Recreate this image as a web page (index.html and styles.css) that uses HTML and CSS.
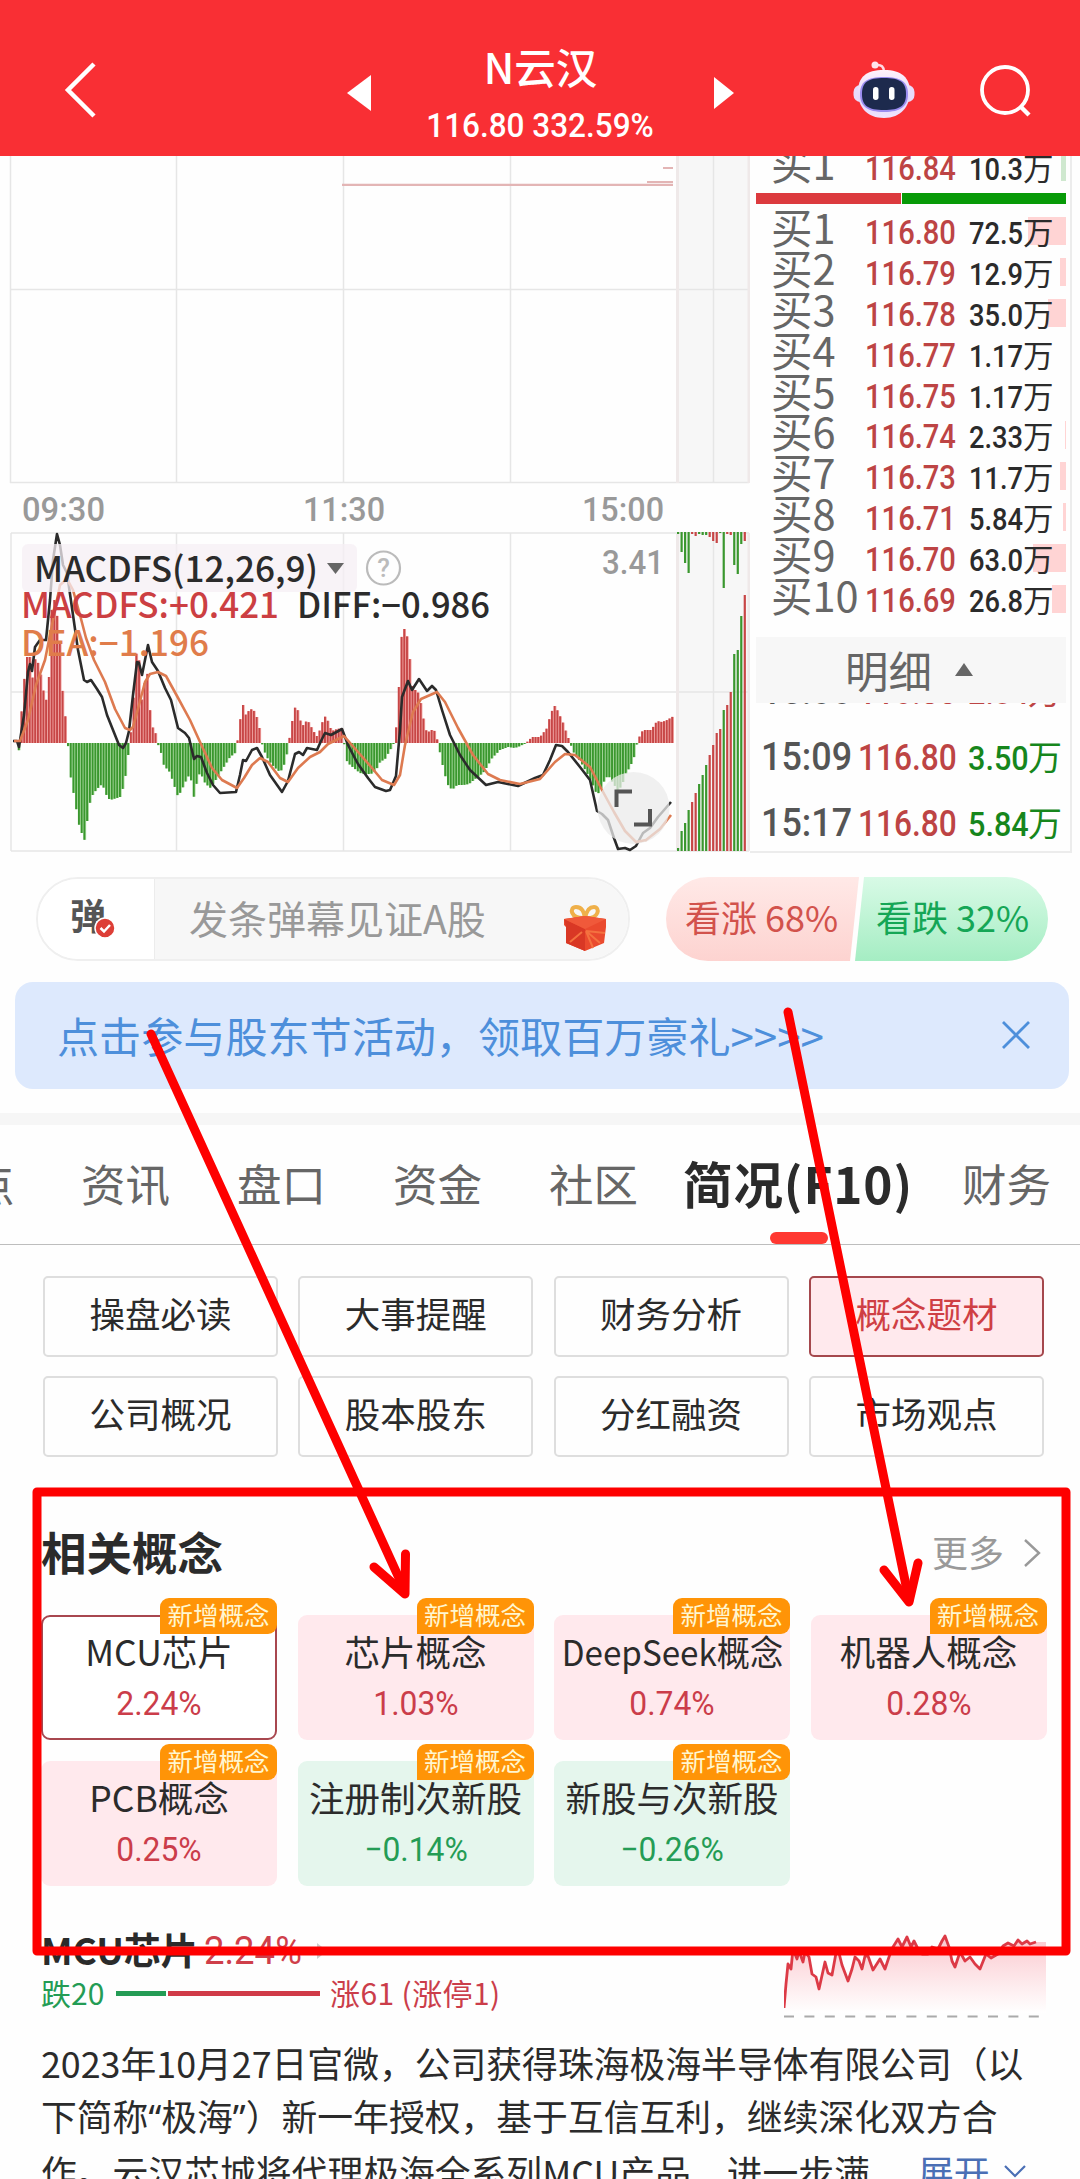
FILE: index.html
```html
<!DOCTYPE html>
<html lang="zh-CN">
<head>
<meta charset="utf-8">
<title>N云汉</title>
<link rel="stylesheet" href="styles.css">
</head>
<body>
<header class="top">
  <svg class="back" width="36" height="60" viewBox="0 0 36 60"><path d="M32 4 6 30 32 56" fill="none" stroke="#fff" stroke-width="4.500"/></svg>
  <svg class="prev" width="24" height="36" viewBox="0 0 24 36"><path d="M24 0V36L0 18Z" fill="#fff"/></svg>
  <div class="stock">
    <div class="name">N云汉</div>
    <div class="quote"><span class="din">116.80 332.59%</span></div>
  </div>
  <svg class="next" width="20" height="32" viewBox="0 0 20 32"><path d="M0 0V32L20 16Z" fill="#fff"/></svg>
  <svg class="robot" width="62" height="58" viewBox="0 0 62 58">
    <defs>
      <linearGradient id="shell" x2="0" y2="1"><stop stop-color="#fff3fb"/><stop offset=".6" stop-color="#e3d6fb"/><stop offset="1" stop-color="#efe4ff"/></linearGradient>
    </defs>
    <path d="M31 12Q31 4 23 5" fill="none" stroke="#ffd9e4" stroke-width="2.500"/><circle cx="22" cy="5" r="3.500" fill="#ffe4ec"/>
    <rect x="0.500" y="25" width="61" height="17" rx="7" fill="#e8dcfb"/>
    <path d="M31 10C49 10 57 18 57 32S48 58 31 58 5 47 5 32 13 10 31 10" fill="url(#shell)"/>
    <path d="M31 17C48 17 55 22 55 34S48 52 31 52 7 46 7 34 14 17 31 17" fill="#9b8df0"/>
    <path d="M31 18C47 18 53 22 53 34S47 50 31 50 9 46 9 34 15 18 31 18" fill="#1d2a4d"/>
    <rect x="20" y="27" width="5.500" height="13" rx="2.700" fill="#fff"/><rect x="36" y="27" width="5.500" height="13" rx="2.700" fill="#fff"/>
  </svg>
  <svg class="search" width="54" height="54" viewBox="0 0 54 54"><circle cx="26" cy="26" r="23" fill="none" stroke="#fff" stroke-width="3.800"/><path d="m42 43 8 8" stroke="#fff" stroke-width="4.500"/></svg>
</header>

<section class="market">
  <svg class="charts" id="charts" width="750" height="699" viewBox="0 156 750 699">
    <rect x="677" y="155" width="72" height="328" fill="#f7f7f7"/>
    <rect x="677" y="532" width="72" height="319" fill="#f7f7f7"/>
    <g stroke="#e6e6e6" stroke-width="1.500" fill="none">
      <path d="M10.500 155V483M176.500 155V483M343.500 155V483M510.500 155V483M713.500 155V483M10 289.500H749M10 482.500H749"/>
      <path d="M11 533V851M176.500 533V851M343.500 533V851M510.500 533V851M713.500 533V851M11 533H749M11 692H749M11 851H749"/>
    </g>
    <path d="M677.500 155V483M677.500 533V851M749 155V483M749 533V851" stroke="#efe9e9" stroke-width="3"/>
    <path d="M342 184.800H673M647 182H673M663 168H673" stroke="#e3b5b5" stroke-width="2.200"/>
    <g class="axis">
      <text x="22" y="520.500" textLength="83" lengthAdjust="spacingAndGlyphs">09:30</text>
      <text x="303" y="520.500" textLength="82" lengthAdjust="spacingAndGlyphs">11:30</text>
      <text x="582" y="520.500" textLength="82" lengthAdjust="spacingAndGlyphs">15:00</text>
      <text x="602" y="574" textLength="62" lengthAdjust="spacingAndGlyphs">3.41</text>
    </g>
    <g id="bars"></g>
    <path id="diff" fill="none" stroke="#2b2b2b" stroke-width="2.600" stroke-linejoin="round"/>
    <path id="dea" fill="none" stroke="#dd7a50" stroke-width="2.600" stroke-linejoin="round"/>
    <rect x="22" y="544" width="335" height="48" rx="6" fill="#f5eff4" opacity=".75"/>
    <path d="M327 563H344L335.500 574Z" fill="#666"/>
    <circle cx="383.500" cy="568" r="16.500" fill="none" stroke="#bbb" stroke-width="2.200"/>
    <text class="hint" x="383.500" y="577" text-anchor="middle">?</text>
    <g class="ind">
      <text x="34" y="582" textLength="284" lengthAdjust="spacingAndGlyphs">MACDFS(12,26,9)</text>
      <text class="r" x="21" y="618" textLength="258" lengthAdjust="spacingAndGlyphs">MACDFS:+0.421</text>
      <text x="297" y="618" textLength="193" lengthAdjust="spacingAndGlyphs">DIFF:−0.986</text>
      <text class="o" x="21" y="656" textLength="188" lengthAdjust="spacingAndGlyphs">DEA:−1.196</text>
    </g>
    <circle cx="633.500" cy="808" r="36" fill="#ebebeb" opacity=".75"/>
    <path d="M616.500 807V791.500H632M634 824.500H650V809" fill="none" stroke="#555" stroke-width="4"/>
  </svg>

  <div class="book">
    <div class="clip">
      <div class="level sell"><span class="lab">买1</span><span class="pr">116.84</span><span class="vol"><i>10.3</i>万</span><b style="width:5px"></b></div>
    </div>
    <div class="ratio"><span></span><span></span></div>
    <div class="levels" id="levels"></div>
    <div class="detail">明细<svg width="18" height="14" viewBox="0 0 18 14"><path d="M9 0 18 13H0Z" fill="#666"/></svg></div>
    <div class="ticks">
      <div class="tick cut"><span class="tm">15:00</span><span class="tp">116.80</span><span class="tv up"><i>2.34</i>万</span></div>
      <div class="tick"><span class="tm">15:09</span><span class="tp">116.80</span><span class="tv"><i>3.50</i>万</span></div>
      <div class="tick"><span class="tm">15:17</span><span class="tp">116.80</span><span class="tv"><i>5.84</i>万</span></div>
    </div>
  </div>
</section>

<section class="social">
  <div class="danmu">
    <div class="toggle">弹<svg width="22" height="22" viewBox="0 0 22 22"><circle cx="11" cy="11" r="10" fill="#dd3f37" stroke="#fff" stroke-width="1.500"/><path d="m6.500 11 3.500 3.500 6-6.500" fill="none" stroke="#fff" stroke-width="2.500"/></svg></div>
    <div class="field"><span>发条弹幕见证A股</span>
      <svg width="46" height="46" viewBox="0 0 46 46">
        <path d="M23 13C8 14 7 2 14 2S22 8 23 13C24 8 26 2 32 2S38 14 23 13" fill="none" stroke="#efb04a" stroke-width="4"/>
        <path d="M2 14 23 11 44 14V22L42 38 23 46 4 38V22L2 20Z" fill="#ea4a2e"/>
        <path d="M2 14 23 24V46L4 38V22Z" fill="#d93825"/><path d="M2 14 23 11 44 14 23 24Z" fill="#f0593a"/>
        <path d="M24 26 38 38M24 26 31 43M24 26 43 28M20 27 8 37" stroke="#f4713f" stroke-width="2"/>
      </svg>
    </div>
  </div>
  <div class="vote">
    <svg width="382" height="84" viewBox="0 0 382 84">
      <defs><linearGradient id="vr" x2="0" y2="1"><stop stop-color="#ffe9e7"/><stop offset="1" stop-color="#fdd3d0"/></linearGradient>
      <linearGradient id="vg" x2="0" y2="1"><stop stop-color="#d8fae6"/><stop offset="1" stop-color="#a5edc3"/></linearGradient></defs>
      <path d="M42 0H193L184 84H42A42 42 0 0 1 42 0" fill="url(#vr)"/>
      <path d="M198 0H340A42 42 0 0 1 340 84H189Z" fill="url(#vg)"/>
    </svg>
    <div class="pair"><span class="up">看涨 68%</span><span class="down">看跌 32%</span></div>
  </div>
</section>

<section class="banner"><span>点击参与股东节活动，领取百万豪礼&gt;&gt;&gt;&gt;</span><svg width="30" height="30" viewBox="0 0 30 30"><path d="M2 2 28 28M28 2 2 28" stroke="#4d8fdb" stroke-width="2.800"/></svg></section>

<nav class="tabs">
  <span class="t0">点</span><span>资讯</span><span>盘口</span><span>资金</span><span>社区</span><span class="on">简况(F10)</span><span>财务</span>
</nav>

<section class="menu">
  <span>操盘必读</span><span>大事提醒</span><span>财务分析</span><span class="on">概念题材</span>
  <span>公司概况</span><span>股本股东</span><span>分红融资</span><span>市场观点</span>
</section>

<section class="concepts">
  <div class="head"><h2>相关概念</h2><span class="more">更多<svg width="18" height="30" viewBox="0 0 18 30"><path d="M2 2 16 15 2 28" fill="none" stroke="#999" stroke-width="2.400"/></svg></span></div>
  <div class="cards">
    <div class="card sel"><em>新增概念</em><p>MCU芯片</p><strong>2.24%</strong></div>
    <div class="card"><em>新增概念</em><p>芯片概念</p><strong>1.03%</strong></div>
    <div class="card"><em>新增概念</em><p class="fit">DeepSeek概念</p><strong>0.74%</strong></div>
    <div class="card"><em>新增概念</em><p>机器人概念</p><strong>0.28%</strong></div>
    <div class="card"><em>新增概念</em><p>PCB概念</p><strong>0.25%</strong></div>
    <div class="card dn"><em>新增概念</em><p>注册制次新股</p><strong>−0.14%</strong></div>
    <div class="card dn"><em>新增概念</em><p>新股与次新股</p><strong>−0.26%</strong></div>
  </div>
</section>

<section class="topic">
  <div class="info">
    <div class="line"><b>MCU芯片</b><span class="pct">2.24%</span><svg width="12" height="18" viewBox="0 0 12 18"><path d="M1 1 11 9 1 17Z" fill="#ccc"/></svg></div>
    <div class="counts"><span class="dn">跌20</span><i class="g"></i><i class="r"></i><span class="up">涨61 (涨停1)</span></div>
  </div>
  <svg class="spark" width="262" height="90" viewBox="784 1932 262 90">
    <defs><linearGradient id="sp" x2="0" y2="1"><stop stop-color="#fbc8ce"/><stop offset="1" stop-color="#fff"/></linearGradient></defs>
    <path id="sparkfill" fill="url(#sp)"/><path id="sparkline" fill="none" stroke="#dc3a46" stroke-width="2.800" stroke-linejoin="round"/>
    <path d="M784 2017.500H1040" stroke="#aaa" stroke-width="1.800" stroke-dasharray="10 10.400"/>
  </svg>
</section>

<section class="text">
  <div>2023年10月27日官微，公司获得珠海极海半导体有限公司（以</div>
  <div>下简称<q>“</q>极海<q>”</q>）新一年授权，基于互信互利，继续深化双方合</div>
  <div class="last"><span>作。云汉芯城将代理极海全系列MCU产品，进一步满...</span><a>展开<svg width="24" height="14" viewBox="0 0 24 14"><path d="M2 2 12 12 22 2" fill="none" stroke="#4a6fb5" stroke-width="2.200"/></svg></a></div>
</section>

<svg class="marks" width="1080" height="2179" viewBox="0 0 1080 2179" fill="none" stroke="#fe0000" stroke-width="9" stroke-linecap="round" stroke-linejoin="round">
  <rect x="37" y="1492" width="1029" height="459"/>
  <path d="M151 1034 404 1589M788 1012 909 1600"/>
  <path d="M374 1567 405 1594 405.500 1554M884 1570 909 1602 918 1563"/>
</svg>
<script src="app.js"></script>
</body>
</html>
```

FILE: styles.css
```css
* { box-sizing: border-box; margin: 0; padding: 0; }
html, body { width: 1080px; height: 2179px; overflow: hidden; }
body { position: relative; background: #fefefe; color: #2b2b2b; font-family: "Noto Sans CJK SC", sans-serif; }
i, em { font-style: normal; }
svg { display: block; flex: none; }
span, p, div { white-space: nowrap; }

.top { height: 156px; background: #f92f34; color: #fff; display: flex; align-items: flex-start; }
.back { margin: 60px 0 0 62px; }
.prev { margin: 75px 0 0 249px; }
.stock { width: 343px; text-align: center; padding-right: 4px; }
.name { margin-top: 41px; font-size: 41.5px; line-height: 50px; font-weight: 500; }
.quote { font: 500 33.5px/40px Roboto, sans-serif; margin-top: 15px; }
.din { display: inline-block; transform: scaleX(.94); }
.next { margin-top: 77px; }
.robot { margin: 60px 0 0 119px; }
.search { margin: 64px 0 0 64px; }

.market { height: 699px; display: flex; }
.axis text { font: 500 34px Roboto, sans-serif; fill: #999; }
.ind text { font: 500 35px "Noto Sans CJK SC", sans-serif; fill: #2b2b2b; }
.ind .r { fill: #cc3f42; }
.ind .o { fill: #e07c4a; }
.hint { font: 500 26px Roboto, sans-serif; fill: #bbb; }

.book { width: 322px; height: 697px; padding: 0 4px 0 6px; border: solid #ececec; border-width: 0 2px 2px 0; overflow: hidden; }
.clip { height: 37px; overflow: hidden; }
.clip .level { margin-top: -14px; }
.ratio { display: flex; height: 11px; gap: 1px; }
.ratio span { width: 145px; background: #dc3a3e; }
.ratio span + span { flex: 1; background: #079a07; }
.levels { height: 433px; padding-top: 2px; }
.level { position: relative; height: 40.9px; display: grid; grid-template-columns: 94px 104px 1fr; align-items: baseline; padding-left: 15px; line-height: 41px; }
.lab { font-size: 41.5px; color: #666; font-weight: 400; z-index: 1; }
.pr { font: 500 33.5px/41px Roboto, sans-serif; color: #bd4444; transform: scaleX(.87); transform-origin: 0 0; z-index: 1; }
.vol { display: flex; align-items: baseline; font-size: 30.5px; z-index: 1; }
.vol i { width: 54px; font: 500 31px/41px Roboto, sans-serif; transform: scaleX(.88); transform-origin: 0 0; }
.level b { position: absolute; right: 0; top: 11px; height: 28px; background: #ffd4d4; }
.sell b { background: #cfe8cf; }
.detail { height: 66px; background: #f7f7f7; font-size: 43.5px; line-height: 64px; color: #666; padding-left: 89px; display: flex; align-items: center; gap: 23px; }
.ticks { height: 146px; overflow: hidden; }
.tick { height: 66px; display: grid; grid-template-columns: 97px 110px 1fr; padding-left: 5px; align-items: baseline; line-height: 66px; }
.tick.cut { margin-top: -46px; }
.tm { font: 500 39px/66px Roboto, sans-serif; color: #555; transform: scaleX(.92); transform-origin: 0 0; }
.tp { font: 500 36px/66px Roboto, sans-serif; color: #bd4444; transform: scaleX(.88); transform-origin: 0 0; }
.tv { display: flex; align-items: baseline; color: #16861c; font-size: 34px; }
.tv i { width: 60px; font: 500 34px/66px Roboto, sans-serif; transform: scaleX(.9); transform-origin: 0 0; }
.tv.up { color: #bd4444; }

.social { display: flex; justify-content: space-between; padding: 22px 32px 0 36px; height: 127px; }
.danmu { display: flex; width: 594px; height: 84px; border: 2px solid #efefef; border-radius: 42px; overflow: hidden; }
.toggle { width: 116px; padding-left: 32px; font-size: 36px; font-weight: 700; color: #555; line-height: 70px; display: flex; background: #fff; }
.toggle svg { margin: 38px 0 0 -12px; }
.field { flex: 1; border-left: 1px solid #ececec; background: #f7f7f7; color: #999; font-size: 39px; line-height: 77px; display: flex; justify-content: space-between; padding: 0 20px 0 34px; }
.field svg { margin-top: 26px; }
.vote { display: grid; }
.vote > * { grid-area: 1 / 1; }
.pair { display: flex; font-size: 36px; line-height: 79px; }
.pair span { width: 191px; padding-left: 19px; }
.pair .up { color: #d2524c; }
.pair .down { color: #15a656; }

.banner { height: 107px; margin: 0 11px 0 15px; padding: 0 38px 2px 42px; background: #dde9fd; border-radius: 18px; display: flex; align-items: center; justify-content: space-between; color: #4d8fdb; font-size: 42.1px; }
.tabs { margin-top: 24px; height: 132px; border-top: 12px solid #f6f6f6; border-bottom: 1px solid #bdbdbd; display: flex; color: #666; font-size: 44.5px; line-height: 115px; }
.tabs span { width: 156px; }
.tabs .t0 { width: 81px; text-indent: -30px; }
.tabs .on { width: 255px; margin-left: -22px; font-size: 49.5px; letter-spacing: .9px; font-weight: 700; color: #2b2b2b; display: flex; position: relative; }
.tabs span:last-child { margin-left: 24px; width: 100px; }
.tabs .on::after { content: ""; position: absolute; left: 87px; bottom: 0; width: 58px; height: 12px; border-radius: 6px; background: #ff3831; }

.menu { display: grid; grid-template-columns: repeat(4, 235px); gap: 19px 20.3px; padding: 31px 0 0 43px; }
.menu span { height: 81px; border: 2px solid #dedede; border-radius: 5px; text-align: center; font-size: 35.5px; line-height: 69px; }
.menu .on { background: #ffe9ed; border-color: #a5484d; color: #cf3f44; }

.concepts { padding: 0 34px 0 41px; margin-top: 57px; }
.head { display: flex; justify-content: space-between; align-items: center; height: 74px; }
h2 { font-size: 45.5px; line-height: 74px; font-weight: 700; }
.more { font-size: 36px; line-height: 70px; color: #999; display: flex; align-items: center; gap: 19px; padding-right: 5px; }
.more svg { margin-top: 4px; }
.cards { display: grid; grid-template-columns: repeat(4, 236px); gap: 21px 20.5px; margin-top: 27px; }
.card { position: relative; height: 125px; border-radius: 9px; background: #ffe9ed; text-align: center; padding-top: 11px; }
.card.sel { background: #fff; border: 2px solid #a8474f; padding-top: 9px; }
.card.dn { background: #e5f6ed; }
.card p { font-size: 35.5px; line-height: 50px; }
.card .fit { display: inline-block; margin: 0 -10px; transform: scaleX(.935); }
.card strong { display: block; font: 400 33.5px/38px Roboto, sans-serif; margin-top: 9px; color: #cb3d4a; transform: scaleX(.95); }
.card .fit + strong { margin-top: 9px; }
.card.dn strong { color: #249c55; }
.card em { position: absolute; right: 0; top: -17px; width: 117px; height: 36px; border-radius: 9px 9px 9px 0; background: #ff9407; color: #fff6d0; font-size: 25.5px; line-height: 31px; }
.card.sel em { right: -2px; top: -19px; }

.topic { display: flex; justify-content: space-between; padding: 0 34px 0 41px; margin-top: 45px; height: 91px; }
.line { display: flex; height: 40px; line-height: 34px; align-items: center; font-size: 37px; }
.line b { width: 163px; margin-top: -5px; }
.pct { font: 400 38px/40px Roboto, sans-serif; color: #cf3f4a; width: 112px; transform: scaleX(.96); transform-origin: 0 0; }
.counts { display: flex; align-items: center; font-size: 30px; line-height: 36px; margin-top: 3px; }
.counts .dn { color: #249c55; width: 75px; }
.counts .up { color: #cb3d4a; margin-left: 10px; letter-spacing: .4px; }
.counts .g { width: 50px; height: 5px; background: #249c55; margin: 2px 2px 0 0; }
.counts .r { width: 152px; height: 5px; background: #d03b48; margin-top: 2px; }

.text { padding: 14px 0 0 41px; font-size: 35.8px; line-height: 53.3px; }
q { font-family: "Noto Sans", sans-serif; quotes: none; }
.last { display: flex; }
.last span { width: 877px; overflow: hidden; }
.last a { color: #4a6fb5; display: flex; align-items: center; gap: 13px; }
.marks { position: absolute; left: 0; top: 0; }
```

FILE: app.js
```js
const levels = [['116.80','72.5',38],['116.79','12.9',6],['116.78','35.0',18],['116.77','1.17',0],['116.75','1.17',0],['116.74','2.33',1],['116.73','11.7',6],['116.71','5.84',3],['116.70','63.0',33],['116.69','26.8',14]];
document.getElementById('levels').innerHTML = levels.map((l, i) =>
  `<div class="level"><span class="lab">买${i + 1}</span><span class="pr">${l[0]}</span><span class="vol"><i>${l[1]}</i>万</span><b style="width:${l[2]}px"></b></div>`).join('');

// MACD histogram envelope: x, signed height
const env = [17,0,19,-8,20.5,0,21,25,24,62,27,86,30,86,32,62,35,84,38,80,41,67,43,54,46,42,49,67,52,143,55,143,58,120,60,97,63,44,65.5,25,67,0,68,-3,70.5,-33,73,-47,76,-65,79,-82,82,-91,84.5,-97,87,-79,90,-59,93,-51,97,-46,101,-42,104,-45,107,-54,110,-57,117,-55,120,-54,123,-45,126,-30,129,-5,130,0,131,12,134,50,136,90,139,84,142,41,145,63,148,71,150,33,153,14,156,9,157.5,0,161,-10,164,-23,169,-28,172,-36,175,-45,178,-54,181,-48,184,-42,188,-33,191,-37,194,-55,197,-38,200,-29,205,-40,210,-45,215,-38,220,-30,225,-22,230,-14,235,-10,237,0,238,5,241,30,243.5,40,246,27,249,33,252,34,255,31,258,22,260,12,261.5,0,263,-3,265,-10,269,-18,274,-24,280,-29,283,-25,286,-15,288,-5,289,0,290,11,293,26,295.5,38,298,32,301,20,304,17,307,24,310,18,313,13,316,7,318,7,320,14,323,23,326,28,329,18,332,12,337,14,343,15,344,0,346,-17,350,-22,355,-26,360,-30,365,-31,371,-31,376,-27,380,-19,385,-16,390,-7,392,-4,393.5,0,396.5,18,399.5,67,402.5,124,405,110,408,105,411,69,413,53,416,53,419,49,422,33,424.5,18,427,10,431,13,434,13,436,8,438,0,440,-10,443,-24,446,-36,449,-45,453,-46,457,-42,463,-42,469,-41,475,-36,483,-30,487,-24,492,-15,500,-7,508,-4,515,-5,520,-3,526,0,528,2,532,6,540,6,547,15,550,27,553,35,555.5,38,558,31,562,23,565,14,568,6,570,0,574,-10,580,-18,587,-30,592,-40,597,-52,600,-48,603,-40,608,-32,613,-40,618,-48,622,-42,626,-30,630,-24,634,-14,637,0,640,8,643,13,651,13,657,22,662,21,667,23,672,26];
const RED = '#c74646', GREEN = '#3a972e', PINK = '#f3a7a5', LIME = '#a9db9f';
const rect = (x, y, w, h, c) => `<rect x="${x.toFixed(2)}" y="${y}" width="${w}" height="${h}" fill="${c}"/>`;
let out = '';
for (let x = 18.8; x < 672.3; x += 2.734) {
  let i = 0;
  while (i < env.length - 4 && env[i + 2] < x) i += 2;
  const h = env[i + 1] + (env[i + 3] - env[i + 1]) * (x - env[i]) / (env[i + 2] - env[i]);
  const y = h > 0 ? (743 - h).toFixed(1) : 743, len = Math.max(1, Math.abs(h)).toFixed(1);
  out += rect(x - 1, y, 2.73, len, h > 0 ? PINK : LIME) + rect(x - 1, y, 1.9, len, h > 0 ? RED : GREEN);
}
// after-hours strip: positive = red, negative = green
const low = [-3,-20,-28,-41,49,58,-67,-76,-86,96,106,118,122,-141,146,159,-197,-201,-235,256];
const high = [-2,-20,-31,-41,2,4,-2,-3,-3,5,9,11,-1,-56,2,3,-33,-42,-12,9];
low.forEach((v, i) => { const h = Math.abs(v); out += rect(677 + i * 3.51, 851 - h, 2.2, h, v > 0 ? RED : GREEN); });
high.forEach((v, i) => { out += rect(677 + i * 3.51, 532, 2.2, Math.abs(v), v > 0 ? RED : GREEN); });
document.getElementById('bars').innerHTML = out;

const diff = '13,741 17,741 19,747 24,715 28,672 30,664 32,671 35,647 40,640 46,640 50,600 53,560 57,534 60,545 63,565 67,573 73,615 78,650 84,680 87,682 91,680 97,689 102,697 107,715 113,730 119,745 123,748 126,743 129,731 133,695 137,662 139,663 142,675 148,645 152,662 158,671 165,688 171,700 178,728 185,733 189,738 194,759 197,756 201,757 207,773 213,785 220,793 236,792 240,775 243,760 246,761 252,750 257,748 262,757 270,775 282,792 288,781 295,754 299,752 303,755 307,748 317,750 321,741 325,733 331,735 342,729 348,745 358,764 368,778 375,787 386,791 390,790 396,776 400,730 402,697 408,681 412,690 419,679 427,691 432,686 436,690 442,710 450,735 460,755 470,770 486,785 498,782 518,786 535,778 543,775 550,760 556,745 562,746 568,752 580,767 590,780 597,811 602,814 608,820 614,838 618,849 625,848 630,850 636,846 643,833 650,828 658,817 671,802';
const dea = '14,741 20,741 28,720 36,685 45,660 52,625 60,585 67,579 73,590 80,615 86,638 94,660 105,682 115,709 125,728 130,730 133,727 139,705 145,682 150,674 158,672 166,676 177,696 190,720 200,742 212,768 222,780 237,788 244,778 252,765 260,758 268,762 280,778 288,782 298,768 310,757 320,752 328,744 344,736 358,752 372,768 382,780 394,785 400,775 405,745 413,712 421,699 437,692 445,702 458,728 473,755 488,774 500,780 520,784 540,779 555,762 565,754 575,755 590,767 602,790 614,812 625,831 636,842 646,840 660,829 671,815';
document.getElementById('diff').setAttribute('d', 'M' + diff);
document.getElementById('dea').setAttribute('d', 'M' + dea);

const spark = '784,2009 786,1985 788,1965 791,1970 793,1950 797,1960 799,1952 803,1963 805,1953 809,1958 812,1975 816,1978 819,1990 825,1963 828,1974 832,1976 836,1954 838,1950 842,1966 848,1982 852,1970 855,1958 859,1962 862,1970 865,1957 868,1957 873,1971 880,1960 885,1970 889,1958 893,1948 898,1940 902,1948 907,1938 911,1948 914,1942 918,1950 922,1955 928,1955 932,1948 938,1950 942,1942 945,1937 949,1948 952,1962 955,1968 960,1953 965,1962 970,1958 975,1965 980,1970 986,1955 991,1959 998,1955 1003,1947 1008,1944 1014,1947 1018,1941 1022,1945 1027,1942 1030,1945 1036,1943';
document.getElementById('sparkline').setAttribute('d', 'M' + spark);
document.getElementById('sparkfill').setAttribute('d', 'M' + spark + ' 1046,1943 1046,2014 784,2014Z');
```
